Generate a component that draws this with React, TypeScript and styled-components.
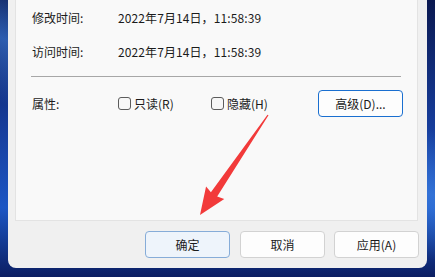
import React from "react";
import styled, { createGlobalStyle } from "styled-components";

const Global = createGlobalStyle`
  html, body { margin: 0; padding: 0; }
  body {
    font-family: "Noto Sans CJK SC", "Microsoft YaHei", "Noto Sans", sans-serif;
    background: #0b1d5e;
  }
`;

const Screen = styled.div`
  position: relative;
  width: 435px;
  height: 277px;
  box-sizing: border-box;
  padding: 0 8px 9px 8px;
  overflow: hidden;
  background:
    linear-gradient(200deg, transparent 30%, rgba(70, 140, 235, 0.55) 45%, transparent 60%),
    linear-gradient(180deg, #0a1850 0%, #163c9a 45%, #1c56c4 75%, #0b1e62 100%);
`;

const Dialog = styled.div`
  height: 268px;
  box-sizing: border-box;
  background: #f0f0f0;
  border-radius: 0 0 8px 8px;
  padding: 0 9px 10px 7px;
  display: flex;
  flex-direction: column;
  color: #1b1b1b;
  font-size: 12px;
`;

const Panel = styled.div`
  flex: 0 0 221px;
  box-sizing: border-box;
  background: #f9f9f9;
  border: 1px solid #e3e3e3;
  border-top: none;
  padding: 0 16px;
  display: flex;
  flex-direction: column;
`;

const InfoRow = styled.div`
  height: 34px;
  display: grid;
  grid-template-columns: 86px 1fr;
  align-items: center;
`;

const Label = styled.span`
  white-space: nowrap;
`;

const Value = styled.span`
  white-space: nowrap;
  letter-spacing: 0.1px;
`;

const Separator = styled.hr`
  margin: 8px 0 0 -1px;
  border: none;
  height: 1px;
  background: #a7a7a7;
`;

const AttrRow = styled.div`
  margin-top: 13px;
  height: 27px;
  display: flex;
  align-items: center;
`;

const AttrLabel = styled.span`
  width: 86px;
  flex: none;
`;

const Check = styled.label<{ $width: number }>`
  width: ${(p) => p.$width}px;
  flex: none;
  display: flex;
  align-items: center;
  gap: 3px;
  white-space: nowrap;
`;

const Box = styled.span`
  width: 11px;
  height: 11px;
  border: 1px solid #5c5c5c;
  border-radius: 3px;
  background: #f7f7f7;
  flex: none;
`;

const Button = styled.button<{ $variant?: "default" | "focus" | "normal" }>`
  width: 85px;
  height: 27px;
  box-sizing: border-box;
  flex: none;
  font-family: inherit;
  font-size: 12px;
  color: #1b1b1b;
  border-radius: 4px;
  padding: 0;
  border: 1px solid
    ${(p) =>
      p.$variant === "focus" ? "#1a6fd0" : p.$variant === "default" ? "#86acd8" : "#d2d2d2"};
  background: ${(p) => (p.$variant === "default" ? "#eef4fb" : "#fdfdfd")};
`;

const ButtonBar = styled.div`
  margin: 10px -1px 0 0;
  display: flex;
  justify-content: flex-end;
  gap: 10px;
  & > button:last-child {
    margin-left: -1px;
  }
`;

const ArrowLayer = styled.svg`
  position: absolute;
  left: 0;
  top: 0;
  pointer-events: none;
`;

export default function App() {
  return (
    <>
      <Global />
      <Screen>
        <Dialog>
          <Panel>
            <InfoRow>
              <Label>修改时间:</Label>
              <Value>2022年7月14日，11:58:39</Value>
            </InfoRow>
            <InfoRow>
              <Label>访问时间:</Label>
              <Value>2022年7月14日，11:58:39</Value>
            </InfoRow>
            <Separator />
            <AttrRow>
              <AttrLabel>属性:</AttrLabel>
              <Check $width={93}>
                <Box />
                只读(R)
              </Check>
              <Check $width={107}>
                <Box />
                隐藏(H)
              </Check>
              <Button $variant="focus">高级(D)...</Button>
            </AttrRow>
          </Panel>
          <ButtonBar>
            <Button $variant="default">确定</Button>
            <Button $variant="normal">取消</Button>
            <Button $variant="normal">应用(A)</Button>
          </ButtonBar>
        </Dialog>
        <ArrowLayer width="435" height="277" viewBox="0 0 435 277">
          <polygon
            transform="translate(268,115) rotate(124.2)"
            points="0,-0.6 96,-3.8 94,-11 121,0 94,11 96,3.8 0,0.6"
            fill="#f23a3a"
          />
        </ArrowLayer>
      </Screen>
    </>
  );
}
